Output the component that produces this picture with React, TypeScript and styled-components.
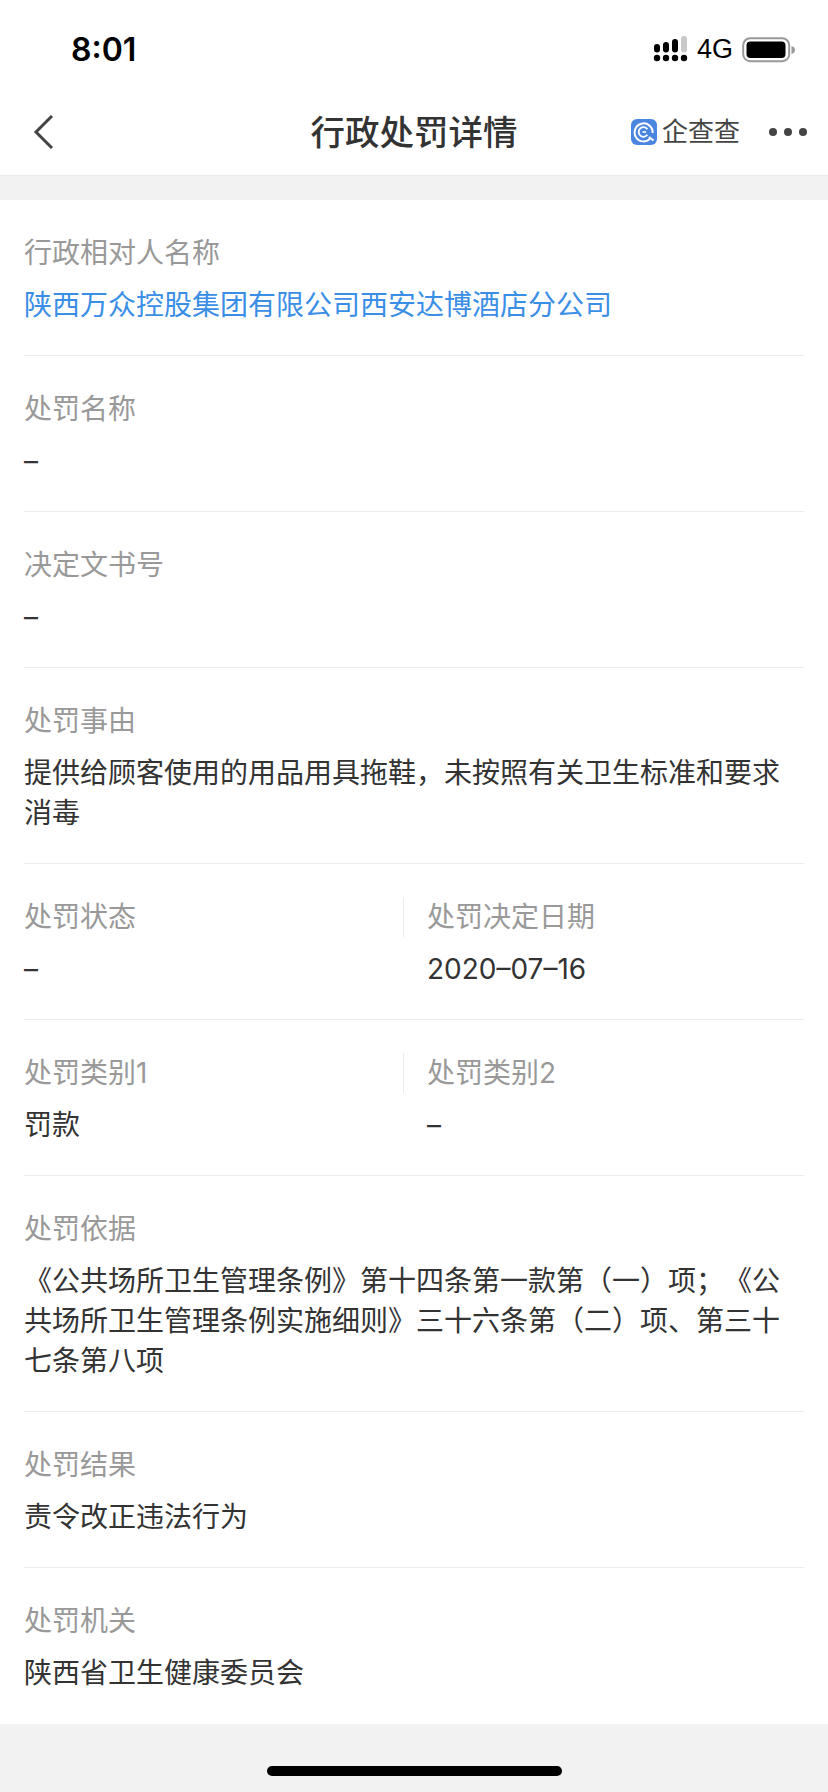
import React from 'react';
import styled, { createGlobalStyle } from 'styled-components';

const GlobalStyle = createGlobalStyle`
  html, body {
    margin: 0;
    padding: 0;
    background: #f2f2f2;
    font-family: Inter, "Noto Sans CJK SC", "Liberation Sans", sans-serif;
    text-spacing-trim: space-all;
  }
`;

const Page = styled.div`
  width: 828px;
  height: 1792px;
  display: flex;
  flex-direction: column;
  background: #f2f2f2;
  overflow: hidden;
`;

const StatusBar = styled.div`
  height: 88px;
  background: #fff;
  display: flex;
  align-items: center;
  justify-content: space-between;
  padding: 11px 32px 0 71px;
  box-sizing: border-box;
`;

const Time = styled.span`
  font-family: Inter, "Liberation Sans", sans-serif;
  font-size: 32px;
  font-weight: 600;
  color: #000;
`;

const StatusIcons = styled.div`
  display: flex;
  align-items: center;
  gap: 9px;
`;

const Network = styled.span`
  font-family: "Liberation Sans", Arial, sans-serif;
  font-size: 27px;
  color: #000;
`;

const NavBar = styled.div`
  height: 88px;
  background: #fff;
  border-bottom: 1px solid #e9e9e9;
  box-sizing: border-box;
  display: flex;
  align-items: center;
  justify-content: space-between;
  padding: 0 21px 0 33px;
  position: relative;
`;

const NavTitle = styled.div`
  position: absolute;
  left: 0;
  right: 0;
  top: 22px;
  text-align: center;
  font-size: 34.5px;
  line-height: 46px;
  font-weight: 500;
  color: #333;
`;

const NavActions = styled.div`
  display: flex;
  align-items: center;
  gap: 29px;
`;

const Brand = styled.div`
  display: flex;
  align-items: center;
  gap: 5px;
`;

const BrandName = styled.span`
  font-size: 26px;
  line-height: 30px;
  color: #444;
`;

const Spacer = styled.div`
  height: 24px;
  flex: none;
`;

const Sheet = styled.div`
  background: #fff;
  padding: 0 24px 1px;
`;

const Row = styled.div<{ $last?: boolean }>`
  padding: 33px 0 30px;
  border-bottom: ${({ $last }) => ($last ? 'none' : '1px solid #ececec')};
`;

const SplitRow = styled(Row)`
  display: grid;
  grid-template-columns: 379px 1fr;
`;

const Label = styled.div<{ $divided?: boolean }>`
  font-size: 28px;
  line-height: 40px;
  color: #999;
  ${({ $divided }) => $divided && 'border-left: 1px solid #ececec; padding-left: 23px;'}
`;

const Value = styled.div<{ $link?: boolean; $inset?: boolean }>`
  margin-top: 12px;
  font-size: 28px;
  line-height: 40px;
  color: ${({ $link }) => ($link ? '#3a8ee6' : '#333')};
  ${({ $inset }) => $inset && 'padding-left: 24px;'}
`;

const Footer = styled.div`
  flex: 1;
  display: flex;
  justify-content: center;
  padding-top: 42px;
`;

const HomeBar = styled.div`
  width: 295px;
  height: 10px;
  border-radius: 5px;
  background: #000;
`;

const SignalIcon = () => (
  <svg width="36" height="28" viewBox="0 0 36 28">
    <g fill="#000">
      <rect x="2" y="8" width="6" height="8.5" rx="3" />
      <rect x="11" y="6" width="6" height="10.5" rx="3" />
      <rect x="20" y="3" width="6" height="13.5" rx="3" />
      <circle cx="5" cy="22" r="3.2" />
      <circle cx="14" cy="22" r="3.2" />
      <circle cx="23" cy="22" r="3.2" />
      <circle cx="32" cy="22" r="3.2" />
    </g>
    <rect x="29" y="0" width="6" height="16.5" rx="3" fill="#c8c8c8" />
  </svg>
);

const BatteryIcon = () => (
  <svg width="54" height="26" viewBox="0 0 54 26">
    <rect x="1.2" y="1.2" width="46" height="23" rx="7" fill="none" stroke="#999" strokeWidth="2" />
    <rect x="4.5" y="4.5" width="39" height="16.5" rx="4" fill="#000" />
    <path d="M49.5 9 C52 9.8 53 11 53 13 C53 15 52 16.2 49.5 17 Z" fill="#999" />
  </svg>
);

const BackIcon = () => (
  <svg width="20" height="34" viewBox="0 0 20 34">
    <path d="M19 1 L3 17 L19 33" fill="none" stroke="#444" strokeWidth="3" />
  </svg>
);

const BrandIcon = () => (
  <svg width="26" height="26" viewBox="0 0 26 26">
    <rect width="26" height="26" rx="6" fill="#4a86e0" />
    <path d="M19.5 19.2 A9 9 0 1 1 21.6 14" fill="none" stroke="#fff" strokeWidth="2" />
    <path d="M16.4 10.2 A4.8 4.8 0 1 0 16.4 15.8" fill="none" stroke="#fff" strokeWidth="1.8" />
    <path d="M15 13 H11.5" stroke="#fff" strokeWidth="1.6" />
    <path d="M18 18 L22.5 21.5" stroke="#fff" strokeWidth="2" />
  </svg>
);

const MoreIcon = () => (
  <svg width="38" height="10" viewBox="0 0 38 10">
    <g fill="#444">
      <circle cx="4" cy="5" r="4" />
      <circle cx="19" cy="5" r="4" />
      <circle cx="34" cy="5" r="4" />
    </g>
  </svg>
);

export default function App() {
  return (
    <Page>
      <GlobalStyle />
      <StatusBar>
        <Time>8:01</Time>
        <StatusIcons>
          <SignalIcon />
          <Network>4G</Network>
          <BatteryIcon />
        </StatusIcons>
      </StatusBar>
      <NavBar>
        <NavTitle>行政处罚详情</NavTitle>
        <BackIcon />
        <NavActions>
          <Brand>
            <BrandIcon />
            <BrandName>企查查</BrandName>
          </Brand>
          <MoreIcon />
        </NavActions>
      </NavBar>
      <Spacer />
      <Sheet>
        <Row>
          <Label>行政相对人名称</Label>
          <Value $link>陕西万众控股集团有限公司西安达博酒店分公司</Value>
        </Row>
        <Row>
          <Label>处罚名称</Label>
          <Value>–</Value>
        </Row>
        <Row>
          <Label>决定文书号</Label>
          <Value>–</Value>
        </Row>
        <Row>
          <Label>处罚事由</Label>
          <Value>提供给顾客使用的用品用具拖鞋，未按照有关卫生标准和要求消毒</Value>
        </Row>
        <SplitRow>
          <div>
            <Label>处罚状态</Label>
            <Value>–</Value>
          </div>
          <div>
            <Label $divided>处罚决定日期</Label>
            <Value $inset>2020–07–16</Value>
          </div>
        </SplitRow>
        <SplitRow>
          <div>
            <Label>处罚类别1</Label>
            <Value>罚款</Value>
          </div>
          <div>
            <Label $divided>处罚类别2</Label>
            <Value $inset>–</Value>
          </div>
        </SplitRow>
        <Row>
          <Label>处罚依据</Label>
          <Value>《公共场所卫生管理条例》第十四条第一款第（一）项；《公共场所卫生管理条例实施细则》三十六条第（二）项、第三十七条第八项</Value>
        </Row>
        <Row>
          <Label>处罚结果</Label>
          <Value>责令改正违法行为</Value>
        </Row>
        <Row $last>
          <Label>处罚机关</Label>
          <Value>陕西省卫生健康委员会</Value>
        </Row>
      </Sheet>
      <Footer>
        <HomeBar />
      </Footer>
    </Page>
  );
}
